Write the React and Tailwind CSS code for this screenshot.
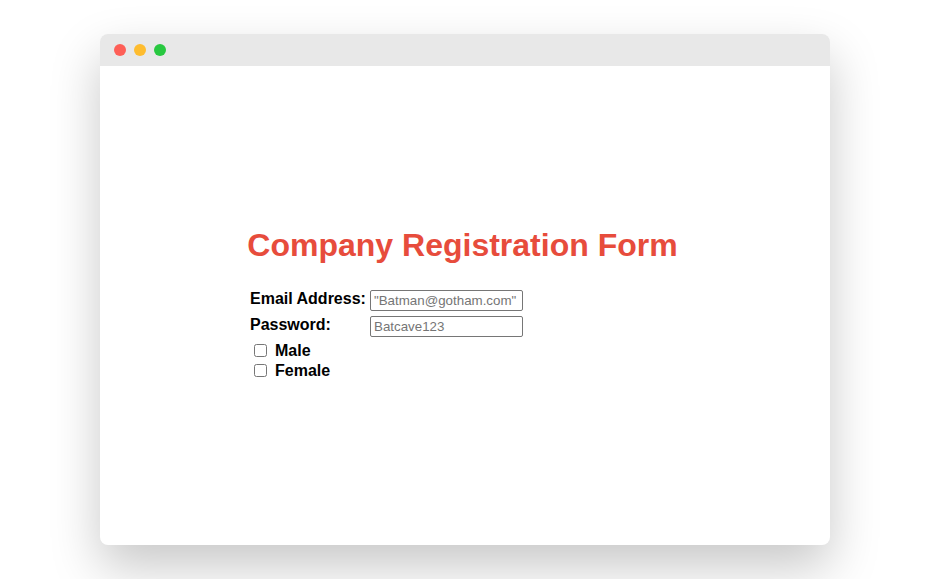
import React from 'react';

const App = () => {
  return (
    <div className="w-[930px] h-[579px] bg-white pt-[34px] pl-[100px] font-['Liberation_Sans',Arial,sans-serif]">
      <div className="w-[730px] h-[511px] rounded-lg bg-white shadow-[0_22px_50px_rgba(0,0,0,0.22)] overflow-hidden flex flex-col">
        {/* title bar */}
        <div className="h-[32px] bg-[#e8e8e8] flex items-center gap-2 pl-[14px]">
          <span className="w-3 h-3 rounded-full bg-[#fe5f57]" />
          <span className="w-3 h-3 rounded-full bg-[#febc2e]" />
          <span className="w-3 h-3 rounded-full bg-[#28c840]" />
        </div>

        <div className="flex-1 pt-[161px]">
          <h1 className="text-center text-[32px] leading-[37px] font-bold text-[#e74c3c] pr-[5px]">
            Company Registration Form
          </h1>

          <form className="mt-[26px] ml-[150px] flex flex-col">
            <div className="flex items-center h-[21px]">
              <label htmlFor="email" className="w-[120px] mb-[3px] text-base leading-[18px] font-bold text-black">
                Email Address:
              </label>
              <input
                id="email"
                type="text"
                placeholder={'"Batman@gotham.com"'}
                className="w-[153px] h-[21px] border border-[#767676] rounded-[2px] px-[3px] text-[13.33px] placeholder:text-[#757575] outline-none"
              />
            </div>
            <div className="flex items-center h-[21px] mt-[5px]">
              <label htmlFor="password" className="w-[120px] mb-[3px] text-base leading-[18px] font-bold text-black">
                Password:
              </label>
              <input
                id="password"
                type="password"
                placeholder="Batcave123"
                className="w-[153px] h-[21px] border border-[#767676] rounded-[2px] px-[3px] text-[13.33px] placeholder:text-[#757575] outline-none"
              />
            </div>

            <div className="mt-[7px] flex flex-col gap-[7px]">
              <label className="flex items-center h-[13px] text-base font-bold text-black">
                <input type="checkbox" className="w-[13px] h-[13px] ml-[4px] mr-[8px]" />
                Male
              </label>
              <label className="flex items-center h-[13px] text-base font-bold text-black">
                <input type="checkbox" className="w-[13px] h-[13px] ml-[4px] mr-[8px]" />
                Female
              </label>
            </div>
          </form>
        </div>
      </div>
    </div>
  );
};

export default App;
